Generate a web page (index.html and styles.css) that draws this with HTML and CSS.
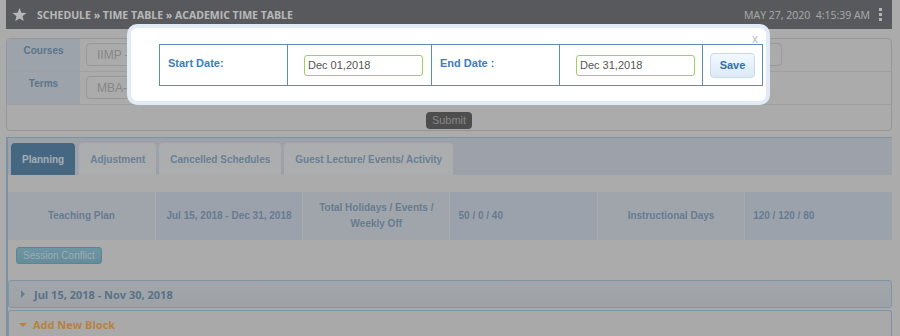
FILE: index.html
```html
<!DOCTYPE html>
<html lang="en">
<head>
  <meta charset="UTF-8" />
  <meta name="viewport" content="width=device-width, initial-scale=1.0"/>
  <title>Academic Time Table</title>
  <link rel="stylesheet" href="styles.css">
</head>
<body>

  <div class="topbar">
    <svg class="star" width="15" height="14" viewBox="0 0 24 23"><path d="M12 0l3.1 7.6 8.2.6-6.3 5.3 2 8L12 17.1 5 21.5l2-8L.7 8.2l8.2-.6z" fill="currentColor"/></svg>
    <span class="crumbs">Schedule » Time Table » Academic Time Table</span>
    <span class="clock">May 27, 2020 &nbsp;4:15:39 AM</span>
    <span class="kebab"><i></i><i></i><i></i></span>
  </div>

  <form class="filters">
    <div class="filter-row">
      <div class="filter-label">Courses</div>
      <div class="filter-field">
        <div class="select select-wide">IIMP - Indian Institute of Management Pune
          <svg class="chev" width="9" height="6" viewBox="0 0 9 6"><path d="M1 1l3.5 3.5L8 1" fill="none" stroke="currentColor" stroke-width="1.2"/></svg>
        </div>
      </div>
    </div>
    <div class="filter-row">
      <div class="filter-label">Terms</div>
      <div class="filter-field">
        <div class="select select-short">MBA-2018-20 Term II</div>
      </div>
    </div>
    <div class="filter-submit"><button type="button" class="btn-submit">Submit</button></div>
  </form>

  <div class="tabpanel">
    <div class="tabs">
      <span class="tab active">Planning</span>
      <span class="tab">Adjustment</span>
      <span class="tab">Cancelled Schedules</span>
      <span class="tab">Guest Lecture/ Events/ Activity</span>
    </div>
    <div class="tab-body">
      <table class="plan-info">
        <tr>
          <td>Teaching Plan</td>
          <td class="val center">Jul 15, 2018 - Dec 31, 2018</td>
          <td>Total Holidays / Events /<br>Weekly Off</td>
          <td class="val">50 / 0 / 40</td>
          <td>Instructional Days</td>
          <td class="val">120 / 120 / 80</td>
        </tr>
      </table>
      <button type="button" class="btn-conflict">Session Conflict</button>
      <div class="block">
        <span class="caret right"></span>Jul 15, 2018 - Nov 30, 2018
      </div>
      <div class="block new">
        <span class="caret down"></span>Add New Block
      </div>
    </div>
  </div>

  <div class="backdrop"></div>

  <div class="modal">
    <span class="close">x</span>
    <table class="date-form">
      <tr>
        <td class="lbl">Start Date:</td>
        <td class="fld"><input type="text" value="Dec 01,2018"></td>
        <td class="lbl">End Date :</td>
        <td class="fld"><input type="text" value="Dec 31,2018"></td>
        <td class="act"><button type="button" class="btn-save">Save</button></td>
      </tr>
    </table>
  </div>

</body>
</html>
```

FILE: styles.css
```css
* { box-sizing: border-box; margin: 0; padding: 0; }

body {
  font-family: 'Liberation Sans', Arial, sans-serif;
  background: #e4e4e4;
  color: #555;
  min-height: 100vh;
  overflow: hidden;
}

/* header bar */
.topbar {
  height: 29px;
  margin: 0 8px 0 6px;
  background: #75777b;
  color: #fff;
  display: flex;
  align-items: center;
  padding: 0 10px 0 6px;
}

.star { color: #f4f4f4; margin-right: 10px; }

.crumbs {
  font-family: 'Open Sans', sans-serif;
  font-weight: 700;
  font-size: 10.5px;
  text-transform: uppercase;
  color: #f6f6f6;
  flex: 1;
}

.clock {
  font-family: 'Open Sans', sans-serif;
  font-size: 10.5px;
  text-transform: uppercase;
  color: #e2e2e2;
  margin-right: 9px;
}

.kebab { display: flex; flex-direction: column; gap: 2px; }
.kebab i { width: 3px; height: 3px; background: #f0f0f0; display: block; }

/* filter form */
.filters {
  margin: 9px 8px 0 6px;
  border: 1px solid #c8c8c8;
  border-radius: 4px;
}

.filter-row {
  display: flex;
  height: 33px;
  border-bottom: 1px solid #d6d6d6;
}

.filter-label {
  width: 73px;
  background: #d1dae4;
  text-align: center;
  font-size: 10px;
  font-weight: bold;
  color: #7b9cbb;
  padding-top: 6px;
}

.filter-field { flex: 1; padding: 4px 0 0 6px; }

.select {
  height: 23px;
  border: 1px solid #cccccc;
  border-radius: 4px;
  font-size: 12px;
  color: #b4b4b4;
  padding: 4px 10px;
  display: flex;
  align-items: center;
  justify-content: space-between;
}

.select-wide { width: 696px; }
.select-short { width: 420px; }
.chev { color: #c6c6c6; }

.filter-submit { text-align: center; padding: 5px 0 2px; height: 25px; }

.btn-submit {
  background: #676767;
  color: #b4b4b4;
  border: none;
  border-radius: 4px;
  font-family: inherit;
  font-size: 11px;
  padding: 2px 6px;
  height: 17px;
}

/* tabs */
.tabpanel {
  margin: 6px 8px 0 6px;
  border-top: 1px solid #a6c4de;
  border-left: 2px solid #a6c4de;
}

.tabs {
  background: #d2d9e3;
  height: 37px;
  padding: 5px 0 0 3px;
  display: flex;
  gap: 3px;
}

.tab {
  height: 32px;
  padding: 0 11px;
  display: flex;
  align-items: center;
  border-radius: 4px 4px 0 0;
  background: #e6e7e9;
  font-size: 10px;
  font-weight: bold;
  color: #8dabc7;
}

.tab.active { background: #5d8aae; color: #dde8f2; margin-right: 1px; }

.tab-body { padding: 17px 0 0; }

.plan-info {
  width: 100%;
  border-collapse: collapse;
  table-layout: fixed;
}

.plan-info td {
  height: 48px;
  background: #d6dde6;
  border-right: 1px solid #e3e5e8;
  font-size: 10px;
  font-weight: bold;
  color: #8aa5c0;
  text-align: center;
  line-height: 16px;
}

.plan-info td.val { background: #cfd9e6; text-align: left; padding-left: 8px; }
.plan-info td.val.center { text-align: center; padding-left: 0; }
.plan-info td:last-child { border-right: none; }

.btn-conflict {
  margin: 7px 0 0 8px;
  height: 17px;
  padding: 0 6px;
  background: linear-gradient(#91c7da, #87bcd0);
  border: 1px solid #7ab0c6;
  border-radius: 3px;
  color: #d0e5eb;
  font-family: inherit;
  font-size: 10px;
  display: block;
}

.block {
  margin-top: 16px;
  height: 28px;
  border: 1px solid #adc6dd;
  border-radius: 3px;
  background: linear-gradient(#d8dde4, #d3d9e0);
  display: flex;
  align-items: center;
  padding-left: 12px;
  font-family: 'Open Sans', sans-serif;
  font-size: 11px;
  font-weight: 700;
  color: #7898b6;
}

.block.new {
  margin-top: 2px;
  background: #e2e2e2;
  border-bottom: none;
  color: #f5ae55;
  padding-left: 10px;
}

.caret { width: 0; height: 0; margin-right: 9px; border-style: solid; }
.caret.right { border-width: 4px 0 4px 4px; border-color: transparent transparent transparent #89a9c6; }
.caret.down { border-width: 4px 4px 0 4px; border-color: #f5ae55 transparent transparent transparent; margin-right: 6px; }

/* dim layer + dialog */
.backdrop {
  position: fixed;
  inset: 0;
  background: rgba(0, 0, 0, 0.25);
}

.modal {
  position: absolute;
  top: 24px;
  left: 127px;
  width: 643px;
  height: 81px;
  background: #fff;
  border: 4px solid #e1ebf5;
  border-radius: 10px;
  padding: 16px 3px 15px 28px;
}

.close {
  position: absolute;
  top: 4px;
  right: 8px;
  font-size: 12px;
  color: #bdbdbd;
}

.date-form {
  width: 100%;
  height: 42px;
  border-collapse: collapse;
  table-layout: fixed;
}

.date-form td { border: 1px solid #5a8cbd; }
.date-form td:nth-child(1) { width: 128px; }
.date-form td:nth-child(2) { width: 144px; }
.date-form td:nth-child(3) { width: 128px; }
.date-form td:nth-child(4) { width: 143px; }

.date-form .lbl {
  font-size: 11px;
  font-weight: bold;
  color: #3b7ec0;
  padding: 0 0 4px 8px;
}

.date-form .fld { padding-left: 16px; }

.date-form input {
  width: 119px;
  height: 21px;
  border: 1px solid #9fd05a;
  border-radius: 3px;
  font-family: inherit;
  font-size: 11px;
  color: #555;
  padding: 0 3px;
}

.date-form .act { text-align: center; }

.btn-save {
  width: 45px;
  height: 25px;
  background: linear-gradient(#f2f8fe, #dce9f6);
  border: 1px solid #c8dbee;
  border-radius: 4px;
  font-family: inherit;
  font-size: 11px;
  font-weight: bold;
  color: #2f6fa8;
}
```
